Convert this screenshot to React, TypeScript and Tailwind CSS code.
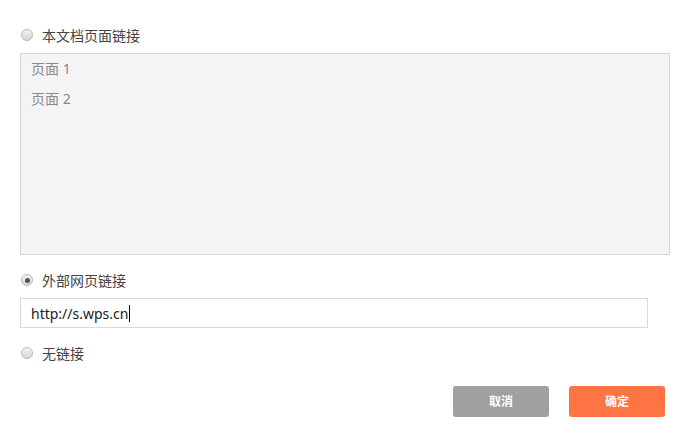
import React from 'react'

function Radio({ checked }: { checked?: boolean }) {
  return (
    <span className="relative ml-[1px] flex h-3 w-3 items-center justify-center rounded-full border border-[#b9b9b9] bg-gradient-to-b from-[#f2f2f2] to-[#d6d6d6]">
      {checked && <span className="h-[5px] w-[5px] rounded-full bg-[#555]" />}
    </span>
  )
}

function Option({ label, checked }: { label: string; checked?: boolean }) {
  return (
    <div className="flex h-5 items-center gap-[9px]">
      <Radio checked={checked} />
      <span className="text-[14px] text-[#444]">{label}</span>
    </div>
  )
}

export default function App() {
  const pages = ['页面 1', '页面 2']

  return (
    <div
      className="h-[438px] w-[690px] bg-white pl-5 pt-[25px]"
      style={{ fontFamily: '"Noto Sans", "Noto Sans CJK SC", sans-serif' }}
    >
      <Option label="本文档页面链接" />

      <div className="mt-2 h-[202px] w-[650px] border border-[#d6d4d7] bg-[#f4f3f5]">
        {pages.map((p) => (
          <div key={p} className="h-[30px] pl-[10px] text-[14px] leading-[30px] text-[#8a8a8a]">
            {p}
          </div>
        ))}
      </div>

      <div className="mt-[15px]">
        <Option label="外部网页链接" checked />
      </div>

      <div className="mt-2 flex h-[30px] w-[628px] items-center border border-[#dadada] bg-white pl-[10px]">
        <span className="text-[14px] text-[#222]">http://s.wps.cn</span>
        <span className="ml-[1px] h-[17px] w-px bg-black" />
      </div>

      <div className="mt-[15px]">
        <Option label="无链接" />
      </div>

      <div className="mt-[23px] flex justify-end gap-5 pr-[25px]">
        <button className="h-[31px] w-24 rounded-[3px] bg-[#a09fa1] text-[12px] font-bold text-white">
          取消
        </button>
        <button className="h-[31px] w-24 rounded-[3px] bg-[#ff7443] text-[12px] font-bold text-white">
          确定
        </button>
      </div>
    </div>
  )
}
